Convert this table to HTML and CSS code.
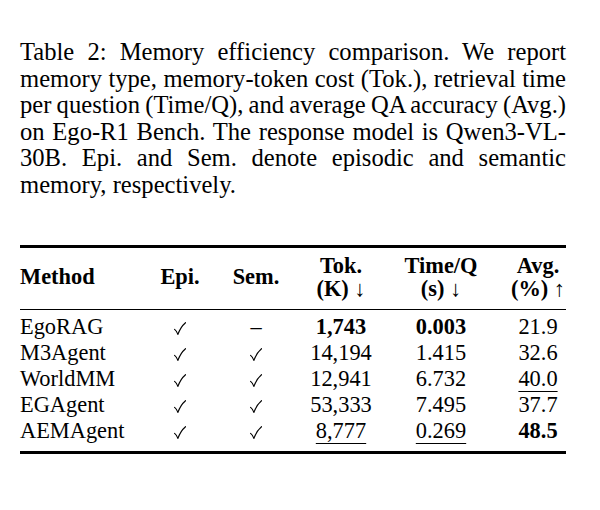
FILE: index.html
```html
<!DOCTYPE html>
<html>
<head>
<meta charset="utf-8">
<title>Table 2: Memory efficiency comparison</title>
<link rel="stylesheet" href="styles.css">
</head>
<body>
<main class="page">
  <p class="caption">
    <span class="ln">Table 2: Memory efficiency comparison. We report</span>
    <span class="ln">memory type, memory-token cost (Tok.), retrieval time</span>
    <span class="ln">per question (Time/Q), and average QA accuracy (Avg.)</span>
    <span class="ln">on Ego-R1 Bench. The response model is Qwen3-VL-</span>
    <span class="ln">30B. Epi. and Sem. denote episodic and semantic</span>
    <span class="ln last">memory, respectively.</span>
  </p>

  <div class="tbl">
    <div class="rule heavy top"></div>

    <div class="th left">Method</div>
    <div class="th">Epi.</div>
    <div class="th">Sem.</div>
    <div class="th">Tok.<br>(K) <span class="arrow">↓</span></div>
    <div class="th">Time/Q<br>(s) <span class="arrow">↓</span></div>
    <div class="th">Avg.<br>(%) <span class="arrow">↑</span></div>

    <div class="rule light mid"></div>

    <div class="td left">EgoRAG</div>
    <div class="td"><svg class="check" viewBox="0 0 12 13"><path d="M0.6 7.4 C1.9 8.4 3 10.2 3.9 12.4 C5.6 7.6 8.1 3.6 11.5 0.7"/></svg></div>
    <div class="td">–</div>
    <div class="td"><b>1,743</b></div>
    <div class="td"><b>0.003</b></div>
    <div class="td">21.9</div>

    <div class="td left">M3Agent</div>
    <div class="td"><svg class="check" viewBox="0 0 12 13"><path d="M0.6 7.4 C1.9 8.4 3 10.2 3.9 12.4 C5.6 7.6 8.1 3.6 11.5 0.7"/></svg></div>
    <div class="td"><svg class="check" viewBox="0 0 12 13"><path d="M0.6 7.4 C1.9 8.4 3 10.2 3.9 12.4 C5.6 7.6 8.1 3.6 11.5 0.7"/></svg></div>
    <div class="td">14,194</div>
    <div class="td">1.415</div>
    <div class="td">32.6</div>

    <div class="td left">WorldMM</div>
    <div class="td"><svg class="check" viewBox="0 0 12 13"><path d="M0.6 7.4 C1.9 8.4 3 10.2 3.9 12.4 C5.6 7.6 8.1 3.6 11.5 0.7"/></svg></div>
    <div class="td"><svg class="check" viewBox="0 0 12 13"><path d="M0.6 7.4 C1.9 8.4 3 10.2 3.9 12.4 C5.6 7.6 8.1 3.6 11.5 0.7"/></svg></div>
    <div class="td">12,941</div>
    <div class="td">6.732</div>
    <div class="td"><u>40.0</u></div>

    <div class="td left">EGAgent</div>
    <div class="td"><svg class="check" viewBox="0 0 12 13"><path d="M0.6 7.4 C1.9 8.4 3 10.2 3.9 12.4 C5.6 7.6 8.1 3.6 11.5 0.7"/></svg></div>
    <div class="td"><svg class="check" viewBox="0 0 12 13"><path d="M0.6 7.4 C1.9 8.4 3 10.2 3.9 12.4 C5.6 7.6 8.1 3.6 11.5 0.7"/></svg></div>
    <div class="td">53,333</div>
    <div class="td">7.495</div>
    <div class="td">37.7</div>

    <div class="td left">AEMAgent</div>
    <div class="td"><svg class="check" viewBox="0 0 12 13"><path d="M0.6 7.4 C1.9 8.4 3 10.2 3.9 12.4 C5.6 7.6 8.1 3.6 11.5 0.7"/></svg></div>
    <div class="td"><svg class="check" viewBox="0 0 12 13"><path d="M0.6 7.4 C1.9 8.4 3 10.2 3.9 12.4 C5.6 7.6 8.1 3.6 11.5 0.7"/></svg></div>
    <div class="td"><u>8,777</u></div>
    <div class="td"><u>0.269</u></div>
    <div class="td"><b>48.5</b></div>

    <div class="rule heavy bottom"></div>
  </div>
</main>
</body>
</html>
```

FILE: styles.css
```css
html, body {
  margin: 0;
  padding: 0;
  background: #ffffff;
}

body {
  color: #000000;
  font-family: "Liberation Serif", "Times New Roman", serif;
}

.page {
  width: 546px;
  padding: 39px 0 0 20px;
}

.caption {
  margin: 0;
  font-size: 24.6px;
  line-height: 26.6px;
  word-spacing: -3px;
}

.ln {
  display: block;
  text-align: justify;
  text-align-last: justify;
}

.ln.last {
  text-align: left;
  text-align-last: left;
  word-spacing: 0;
}

.tbl {
  margin-top: 46px;
  display: grid;
  grid-template-columns: 138px 44px 108px 62px 138px 56px;
  justify-items: center;
  font-size: 22.4px;
}

.rule {
  grid-column: 1 / -1;
  justify-self: stretch;
  background: #000000;
}

.heavy {
  height: 3px;
}

.light {
  height: 1px;
}

.top {
  margin-bottom: 6px;
}

.mid {
  margin-top: 8px;
  margin-bottom: 4px;
}

.bottom {
  margin-top: 6px;
}

.th {
  font-weight: bold;
  line-height: 23.5px;
  align-self: center;
  text-align: center;
  white-space: nowrap;
}

.td {
  line-height: 26.2px;
  white-space: nowrap;
}

.left {
  justify-self: start;
  text-align: left;
}

.arrow {
  font-weight: normal;
}

.td u {
  text-decoration: underline;
  text-decoration-thickness: 1px;
  text-underline-offset: 5px;
}

.check {
  width: 12px;
  height: 13px;
  vertical-align: -1px;
}

.check path {
  fill: none;
  stroke: #000000;
  stroke-width: 1.15;
  stroke-linecap: round;
}
```
